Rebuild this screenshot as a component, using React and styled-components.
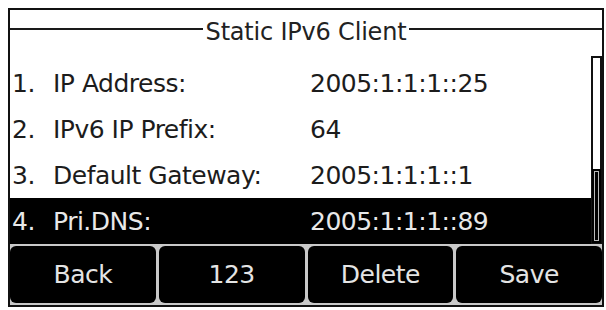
import React from 'react'
import styled, { createGlobalStyle } from 'styled-components'

const GlobalStyle = createGlobalStyle`
  body {
    margin: 0;
    background: #fff;
    font-family: "DejaVu Sans", Verdana, sans-serif;
  }
`

const Screen = styled.div`
  box-sizing: border-box;
  margin: 8px 0 0 8px;
  width: 596px;
  height: 299px;
  border: 2px solid #111;
  display: flex;
  flex-direction: column;
  background: #fff;
`

const TitleBar = styled.div`
  height: 50px;
  display: flex;
  align-items: flex-start;
  gap: 3px;

  &::before,
  &::after {
    content: '';
    flex: 1;
    height: 2px;
    margin-top: 18px;
    background: #1a1a1a;
  }
`

const Title = styled.div`
  font-size: 24px;
  letter-spacing: -0.2px;
  line-height: 1;
  color: #222;
  padding-top: 10px;
`

const List = styled.div`
  position: relative;
  display: flex;
  flex-direction: column;
`

const Row = styled.div`
  height: 46px;
  display: grid;
  grid-template-columns: 41px 257px 1fr;
  align-items: center;
  padding-left: 2px;
  font-size: 25px;
  letter-spacing: -0.5px;
  color: ${p => (p.$active ? '#e8e8e8' : '#1c1c1c')};
  background: ${p => (p.$active ? '#000' : '#fff')};
`

const ScrollTrack = styled.div`
  position: absolute;
  top: -4px;
  right: 0;
  bottom: 0;
  width: 11px;
  box-sizing: border-box;
  border: 2px solid #111;
  background: #fff;
  display: flex;
  flex-direction: column;
  justify-content: flex-end;
`

const ScrollThumb = styled.div`
  height: 74px;
  margin: 0 -1px -1px;
  background: #000;
  box-shadow: inset 0 0 0 2px #000, inset 0 0 0 3px #bbb;
`

const Softkeys = styled.div`
  flex: 1;
  display: flex;
  gap: 3px;
  padding: 2px 0;
  background: #c9c9c9;
`

const Softkey = styled.div`
  flex: 1;
  display: flex;
  align-items: center;
  justify-content: center;
  background: #000;
  border-radius: 6px;
  color: #e4e4e4;
  font-size: 25px;
  letter-spacing: -0.5px;
`

const rows = [
  ['1.', 'IP Address:', '2005:1:1:1::25'],
  ['2.', 'IPv6 IP Prefix:', '64'],
  ['3.', 'Default Gateway:', '2005:1:1:1::1'],
  ['4.', 'Pri.DNS:', '2005:1:1:1::89'],
]

const keys = ['Back', '123', 'Delete', 'Save']

const App = () => (
  <>
    <GlobalStyle />
    <Screen>
      <TitleBar>
        <Title>Static IPv6 Client</Title>
      </TitleBar>
      <List>
        {rows.map(([num, label, value], i) => (
          <Row key={num} $active={i === 3}>
            <span>{num}</span>
            <span>{label}</span>
            <span>{value}</span>
          </Row>
        ))}
        <ScrollTrack>
          <ScrollThumb />
        </ScrollTrack>
      </List>
      <Softkeys>
        {keys.map(k => (
          <Softkey key={k}>{k}</Softkey>
        ))}
      </Softkeys>
    </Screen>
  </>
)

export default App
